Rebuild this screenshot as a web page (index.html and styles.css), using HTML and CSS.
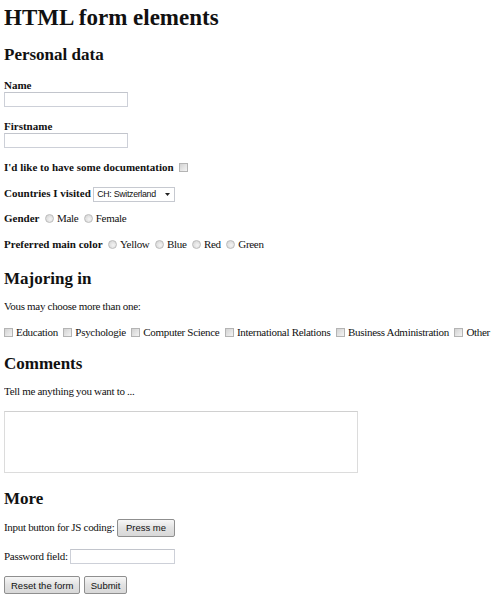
FILE: index.html
```html
<!DOCTYPE html>
<html lang="en">
<head>
<meta charset="utf-8">
<title>HTML form elements</title>
<link rel="stylesheet" href="styles.css">
</head>
<body>
<h1 class="title">HTML form elements</h1>
<form class="form">
  <h2 class="section first">Personal data</h2>
  <p class="row"><label class="lbl" for="name">Name</label><br><input class="text" id="name" type="text"></p>
  <p class="row"><label class="lbl" for="firstname">Firstname</label><br><input class="text" id="firstname" type="text"></p>
  <p class="row"><label class="lbl" for="doc">I'd like to have some documentation</label> <input class="check" id="doc" type="checkbox"></p>
  <p class="row tight"><label class="lbl" for="country">Countries I visited</label> <span class="select-wrap"><select class="select" id="country"><option>CH: Switzerland</option></select><svg class="arrow" width="5" height="3" viewBox="0 0 5 3"><path d="M0 0H5L2.5 3Z" fill="#222"/></svg></span></p>
  <p class="row"><span class="lbl">Gender</span> <input class="radio" type="radio" name="g">Male <input class="radio" type="radio" name="g">Female</p>
  <p class="row"><span class="lbl">Preferred main color</span> <input class="radio" type="radio" name="c">Yellow <input class="radio" type="radio" name="c">Blue <input class="radio" type="radio" name="c">Red <input class="radio" type="radio" name="c">Green</p>

  <h2 class="section">Majoring in</h2>
  <p class="row">Vous may choose more than one:</p>
  <p class="row nowrap"><input class="check first" type="checkbox">Education <input class="check" type="checkbox">Psychologie <input class="check" type="checkbox">Computer Science <input class="check" type="checkbox">International Relations <input class="check" type="checkbox">Business Administration <input class="check" type="checkbox">Other</p>

  <h2 class="section comments">Comments</h2>
  <p class="row">Tell me anything you want to ...</p>
  <textarea class="area"></textarea>

  <h2 class="section after-area">More</h2>
  <p class="row ctl">Input button for JS coding: <input class="btn wide" type="button" value="Press me"></p>
  <p class="row ctl">Password field: <input class="text pw" type="password"></p>
  <p class="row ctl"><input class="btn" type="reset" value="Reset the form"> <input class="btn" type="submit" value="Submit"></p>
</form>
</body>
</html>
```
FILE: styles.css
```css
html, body {
  background: #fff;
}
body {
  margin: 0 4px;
  font-family: "Liberation Serif", "Times New Roman", serif;
  font-size: 11px;
  line-height: 14px;
  letter-spacing: -0.3px;
  color: #111;
}
.title {
  font-size: 23px;
  line-height: 26px;
  letter-spacing: 0;
  margin: 5px 0 13px;
}
.section {
  font-size: 17px;
  line-height: 20px;
  letter-spacing: 0;
  margin: 18px 0 10px;
}
.section.first {
  margin-top: 14px;
  margin-bottom: 13px;
}
.section.comments {
  margin-top: 15px;
}
.section.after-area {
  margin-top: 16px;
}
.form {
  margin: 0;
}
.row {
  margin: 12px 0;
}
.row.tight {
  margin-bottom: 9px;
}
.row.tight + .row {
  margin-top: 9px;
}
.section + .row {
  margin-top: 0;
}
.row.ctl {
  margin-bottom: 11px;
}
.nowrap {
  white-space: nowrap;
}
.lbl {
  font-weight: bold;
  letter-spacing: 0;
}
.text {
  box-sizing: border-box;
  width: 124px;
  height: 15px;
  margin: 0;
  padding: 1px 2px;
  border: 1px solid #cdd0d8;
  border-top-color: #c2c5cc;
  font: 9px "Liberation Sans", Arial, sans-serif;
  vertical-align: bottom;
}
.pw {
  width: 105px;
  vertical-align: middle;
}
.check, .radio {
  appearance: none;
  -webkit-appearance: none;
  box-sizing: border-box;
  width: 9px;
  height: 9px;
  margin: 0 3px 0 3px;
  vertical-align: -1px;
  border: 1px solid #b4b4b4;
  background: linear-gradient(135deg, #d2d2d2, #f4f4f4);
}
.check.first {
  margin-left: 0;
}
.radio {
  border-radius: 50%;
  border-color: #bcbcbc;
  background: radial-gradient(circle at 60% 60%, #f4f4f4, #d0d0d0);
}
.select-wrap {
  position: relative;
  display: inline-block;
  line-height: 12px;
}
.select {
  appearance: none;
  -webkit-appearance: none;
  box-sizing: border-box;
  width: 82px;
  height: 15px;
  margin: 0;
  padding: 0 10px 0 3px;
  border: 1px solid #c6c9d0;
  background: #fff;
  color: #111;
  font: 8.8px "Liberation Sans", Arial, sans-serif;
  letter-spacing: -0.3px;
  display: inline-block;
  vertical-align: baseline;
}
.arrow {
  position: absolute;
  right: 5px;
  top: 6px;
}
.area {
  display: block;
  box-sizing: border-box;
  width: 354px;
  height: 62px;
  margin: 13px 0 0;
  border: 1px solid #dcdcdc;
  border-top-color: #d0d0d0;
  resize: none;
}
.btn {
  box-sizing: border-box;
  height: 18px;
  margin: 0;
  padding: 0 6px;
  border: 1px solid #8f8f8f;
  border-radius: 2px;
  background: linear-gradient(#f7f7f7, #e2e2e2 50%, #d8d8d8);
  color: #111;
  font: 9.5px "Liberation Sans", Arial, sans-serif;
  letter-spacing: 0;
  vertical-align: middle;
}
.btn.wide {
  padding: 0 8px;
}
.btn + .btn {
  margin-left: 1px;
}
```
